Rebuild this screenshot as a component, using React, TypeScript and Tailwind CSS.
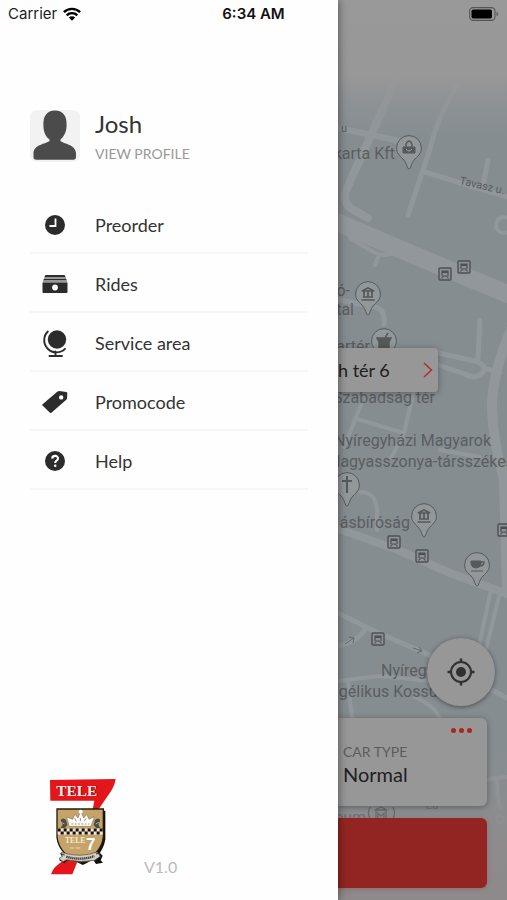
import React from "react";

function ClockIcon() {
  return (
    <svg className="size-5" viewBox="0 0 20 20" aria-hidden="true">
      <circle cx="10" cy="10" r="10" fill="#2c2c2c" />
      <path d="M10.5 3.5v7.500H4.5" fill="none" stroke="#fff" strokeWidth="1.8" />
    </svg>
  );
}

function RidesIcon() {
  return (
    <svg className="h-[18px] w-[26px]" viewBox="0 0 26 18" aria-hidden="true">
      <path d="M3.5 0h19l1.2 2H2.4z" fill="#2c2c2c" />
      <path d="M2.4 2h21.3l.5 2H1.8z" fill="#999" />
      <path d="M1.8 4h22.4l.6 1.6H1.2z" fill="#2c2c2c" />
      <path d="M1.2 5.6h23.6l.4 2H.8z" fill="#999" />
      <path d="M.5 7.5h25V17a1 1 0 0 1-1 1h-23a1 1 0 0 1-1-1z" fill="#2c2c2c" />
      <circle cx="13" cy="12.5" r="2.9" fill="#fff" />
    </svg>
  );
}

function GlobeIcon() {
  return (
    <svg className="h-[27px] w-6" viewBox="0 0 24 27" aria-hidden="true">
      <circle cx="14" cy="9.5" r="9.2" fill="#2c2c2c" />
      <path d="M4.8 1.5A12 12 0 0 0 22 18.800M12.5 21.500v4M6.5 26h12.500" fill="none" stroke="#2c2c2c" strokeWidth="1.9" strokeLinecap="round" />
    </svg>
  );
}

function TagIcon() {
  return (
    <svg className="h-6 w-[26px]" viewBox="0 0 26 24" aria-hidden="true">
      <path
        fillRule="evenodd"
        fill="#2c2c2c"
        d="M.6 14.2 15.500 1.600q.8-.6 1.8-.6l7 .9q1 .2 1 1.2l-.2 5q-.1 1-.8 1.700L9.400 22.700q-.9.8-1.700-.1L.5 15.500q-.6-.7.1-1.300zM19.200 5.200a2.200 2.200 0 1 0 0 4.400 2.200 2.200 0 0 0 0-4.400z"
      />
    </svg>
  );
}

function HelpIcon() {
  return (
    <svg className="size-5" viewBox="0 0 20 20" aria-hidden="true">
      <circle cx="10" cy="10" r="10" fill="#2c2c2c" />
      <path d="M7.2 7.6C7.3 4 13 4.1 13 7.4c0 2.2-2.8 2-2.8 4.6" fill="none" stroke="#fff" strokeWidth="2.1" />
      <circle cx="10.2" cy="14.8" r="1.3" fill="#fff" />
    </svg>
  );
}

const menu = [
  { label: "Preorder", icon: <ClockIcon /> },
  { label: "Rides", icon: <RidesIcon /> },
  { label: "Service area", icon: <GlobeIcon /> },
  { label: "Promocode", icon: <TagIcon /> },
  { label: "Help", icon: <HelpIcon /> },
];

function StatusBar() {
  return (
    <header className="absolute inset-x-0 top-0 z-20 grid h-7 grid-cols-3 items-center px-2 font-['Inter',sans-serif] text-[15px] text-[#222]">
      <div className="flex items-center gap-[6px]">
        <span>Carrier</span>
        <svg className="h-[14px] w-[18px]" viewBox="0 0 18 14" aria-hidden="true">
          <path d="M.9 5.2a11.500 11.500 0 0 1 16.200 0M3.700 8.300a7.600 7.600 0 0 1 10.600 0" fill="none" stroke="#000" strokeWidth="2.4" />
          <path d="M5.9 10.600a4.400 4.400 0 0 1 6.200 0L9 13.800z" fill="#000" />
        </svg>
      </div>
      <span className="text-center font-semibold text-[#111]">6:34 AM</span>
      <svg className="h-[14px] w-[30px] justify-self-end" viewBox="0 0 30 14" aria-hidden="true">
        <rect x=".6" y=".6" width="25.4" height="12.8" rx="3.6" fill="none" stroke="#555" strokeWidth="1.1" />
        <rect x="2.5" y="2.5" width="20.5" height="9" rx="1.8" fill="#000" />
        <path d="M27.4 4.8q2 .7 2 2.2t-2 2.2z" fill="#666" />
      </svg>
    </header>
  );
}

function BrandLogo() {
  return (
    <svg className="h-[100px] w-[70px]" viewBox="54 51 210 300" role="img" aria-label="Tele 7">
      <path d="M60 60L257 57Q254 80 235 105L205 149L127 343H63Q70 318 105 300L188 149L193 122H61Z" fill="#e3161b" />
      <text x="82" y="109" fontFamily="Liberation Serif, serif" fontWeight="bold" fontSize="46" fill="#8b1518">TELE</text>
      <text x="79" y="107" fontFamily="Liberation Serif, serif" fontWeight="bold" fontSize="46" fill="#eeeae6">TELE</text>
      <path d="M88 152H226V238Q219 290 158 315Q100 286 88 238Z" fill="#16120c" />
      <path d="M81 147H220V230Q216 282 151 309Q88 284 81 232Z" fill="#c6a369" stroke="#211a11" strokeWidth="4" />
      <path d="M118 199L110 171L128 178L135 163L144 174L152 154L161 174L170 163L177 178L193 170L183 199Z" fill="#fff" stroke="#75613e" strokeWidth="1.5" />
      <circle cx="152" cy="155" r="6" fill="#fff" />
      <path d="M124 192h54" stroke="#a99163" strokeWidth="3" strokeDasharray="6 4" />
      <path d="M139 184l-5-9M151 184v-10M163 184l5-9" stroke="#a99163" strokeWidth="3" />
      <path d="M92 180q7-9 16 0l4 15-8 9H92l6-10zM211 180q-7-9-16 0l-4 15 8 9h12l-6-10z" fill="#4d4b45" />
      <path d="M94 187l10 5M207 187l-10 5" stroke="#aaa99a" strokeWidth="3" />
      <rect x="83" y="206" width="135" height="18" fill="#f0e5ce" />
      <path d="M83 210h135" stroke="#15120e" strokeWidth="9" strokeDasharray="9 9" />
      <path d="M92 219h126" stroke="#15120e" strokeWidth="9" strokeDasharray="9 9" />
      <text x="105" y="250" fontFamily="Liberation Serif, serif" fontWeight="bold" fontSize="23" fill="#f5e9d0">TELE</text>
      <text x="168" y="270" fontFamily="Liberation Sans, sans-serif" fontWeight="bold" fontSize="51" fill="#fff">7</text>
      <path d="M119 264h12m5 0h15" stroke="#ead9b5" strokeWidth="3" />
      <path d="M92 280Q153 301 207 276L218 287L212 301L219 308L198 312L190 300Q153 313 113 300L103 310L87 300L97 293Z" fill="#111" />
      <path d="M94 277Q151 295 202 276L211 289L194 301Q151 309 110 299L99 305L87 296L97 289Z" fill="#d5d0c7" stroke="#47423b" strokeWidth="2" />
      <path d="M109 290Q153 303 193 288" fill="none" stroke="#393631" strokeWidth="7" strokeDasharray="4 2" />
      <path d="M90 281l14 4m94-3 13-3" stroke="#333" strokeWidth="3" />
    </svg>
  );
}

function Drawer() {
  return (
    <aside className="relative z-10 flex w-2/3 flex-col bg-[#fefefe] pt-[110px] text-[#333] shadow-[0_0_9px_rgba(0,0,0,0.5)]">
      <a href="#profile" className="mx-[30px] flex h-[52px] gap-[15px]">
        <svg className="h-[52px] w-[50px] shrink-0" viewBox="0 0 50 52" role="img" aria-label="Profile picture">
          <rect width="50" height="52" rx="7" fill="#f2f2f2" />
          <path d="M25 .6C33 .6 37 6 36.600 15.500C36.500 22 34 26.500 30.500 29.500V31C34 34 45.500 34.500 46 43V47Q46 49.700 43.300 49.700H6.200Q3.500 49.700 3.500 47V43C4 34.500 15.500 34 19.500 31V29.500C15.500 26.500 13.500 22 13.400 15.500C13 6 17 .6 25 .6Z" fill="#4b4b4b" />
        </svg>
        <div>
          <h1 className="text-[24px] leading-7">Josh</h1>
          <p className="mt-[6px] text-[14px] leading-5 text-[#999]">VIEW PROFILE</p>
        </div>
      </a>
      <nav className="mx-[30px] mt-[33px]">
        <ul>
          {menu.map((item) => (
            <li key={item.label} className="border-b-2 border-[#f6f6f6]">
              <a href="#menu" className="flex h-[57px] items-center gap-[15px] pt-[3px] text-[18px]">
                <span className="flex w-[50px] justify-center">{item.icon}</span>
                <span>{item.label}</span>
              </a>
            </li>
          ))}
        </ul>
      </nav>
      <footer className="mt-auto flex items-end gap-[26px] pb-[23px] pl-12">
        <BrandLogo />
        <span className="text-[16px] leading-5 text-[#bbb]">V1.0</span>
      </footer>
    </aside>
  );
}

function Pin({ x, y, children }: { x: number; y: number; children: React.ReactNode }) {
  return (
    <g transform={`translate(${x} ${y})`} fill="none" stroke="#56595a" strokeWidth="1">
      <path d="M0 21C-2 21-2 15-6 11-10 7-12.400 5-12.400 0A12.400 12.400 0 1 1 12.400 0C12.400 5 10 7 6 11 2 15 2 21 0 21Z" fill="#92979a" />
      {children}
    </g>
  );
}

function Museum() {
  return (
    <path d="M-6-3 0-6 6-3zM-5 3H5M-6.500 6H6.500M-4-3V3M0-3V3M4-3V3" strokeWidth="1.700" />
  );
}

function Stop({ x, y }: { x: number; y: number }) {
  return (
    <g transform={`translate(${x} ${y})`} fill="none" stroke="#4e5153">
      <rect x="-6" y="-6" width="12" height="12" rx="1" strokeWidth="1.400" fill="#8c9295" />
      <path d="M-3 2V-3H3V2M-3.500 4.500-1.500 2H1.500L3.500 4.500" strokeWidth="1.200" />
      <path d="M-3-2H3" strokeWidth="2" />
    </g>
  );
}

function CityMap() {
  return (
    <svg className="absolute inset-0 size-full" viewBox="338 0 169 900" preserveAspectRatio="xMinYMin slice" role="img" aria-label="Map">
      <defs>
        <linearGradient id="topFade" x1="0" y1="0" x2="0" y2="1">
          <stop offset="0" stopColor="#999" />
          <stop offset=".52" stopColor="#989898" />
          <stop offset="1" stopColor="#899095" stopOpacity="0" />
        </linearGradient>
        <linearGradient id="bottomFade" x1="0" y1="0" x2="0" y2="1">
          <stop offset="0" stopColor="#8e8d8e" stopOpacity="0" />
          <stop offset=".7" stopColor="#8e8b8c" />
          <stop offset="1" stopColor="#8e8a8b" />
        </linearGradient>
      </defs>
      <rect x="338" width="169" height="900" fill="#868d91" />
      <g fill="none" stroke="#92979b" strokeLinejoin="round" strokeLinecap="round">
        <path d="M396 80 371 135 348 186Q341 200 350 208L368 218" strokeWidth="8" />
        <path d="M338 128 400 141" strokeWidth="6" />
        <path d="M457 85Q438 115 429 152L408 215M425 172 507 197M488 160 483 185" strokeWidth="5" />
        <path d="M330 219 395 247 440 266 515 297" strokeWidth="18" />
        <path d="M350 238 375 253Q388 258 400 250M375 265 379 255" strokeWidth="4" />
        <circle cx="504" cy="225" r="8" strokeWidth="4" />
        <path d="M330 298 375 307Q386 310 384 324M480 320 478 359M438 353 475 361Q489 366 482 373T465 374L438 365M485 368 500 373" strokeWidth="5" />
        <path d="M513 325Q491 375 492 410 493 441 504 480L507 590" strokeWidth="10" />
        <path d="M361 405 344 447M357 419 404 433 415 386M404 433 391 458M440 450 480 457M360 492Q376 492 377 510V530" strokeWidth="4" />
        <path d="M330 526 398 550 450 573 507 594" strokeWidth="8" />
        <path d="M491 590 477 655M500 592 484 658" strokeWidth="4" />
        <path d="M330 609 376 632 425 653 507 698M366 628Q358 642 338 646" strokeWidth="5" />
        <path d="M330 682 380 676 430 681M348 680 352 718M415 697Q438 708 440 720M488 779 507 777M497 780Q497 800 501 808" strokeWidth="4" />
        <circle cx="500" cy="819" r="4" strokeWidth="2" />
      </g>
      <path d="m345 644 9-6m-5-1 5 1-1 5M413 648l9 3m-3-4 3 4-5 2" fill="none" stroke="#666a6c" />
      <rect x="338" width="169" height="145" fill="url(#topFade)" />
      <rect x="338" y="745" width="169" height="155" fill="url(#bottomFade)" />
      <g fontFamily="Roboto, sans-serif" fontSize="16" fill="#5b5e60">
        <text x="341" y="132" fontSize="11">u</text>
        <text x="395" y="159" textAnchor="end">karta Kft</text>
        <text x="459" y="184" fontSize="11" transform="rotate(13 459 184)">Tavasz u.</text>
        <text x="350" y="296" textAnchor="end">ó-</text>
        <text x="354" y="315" textAnchor="end">tal</text>
        <text x="370" y="352" textAnchor="end">vartér</text>
        <text x="435" y="403" textAnchor="end">Szabadság tér</text>
        <text x="491" y="446" textAnchor="end">Nyíregyházi Magyarok</text>
        <text x="329" y="467">Nagyasszonya-társszékesegyház</text>
        <text x="410" y="528" textAnchor="end">ásbíróság</text>
        <text x="381" y="676">Nyíregyházi</text>
        <text x="330" y="697">ngélikus Kossuth</text>
        <text x="366" y="823" textAnchor="end" fill="#727273">eum</text>
        <text x="426" y="809" fontSize="11" fill="#727273">Eu</text>
      </g>
      <Pin x={409} y={148}>
        <path d="M-6-1H6V5H-6z" fill="#56595a" />
        <path d="M-3-1V-4Q0-10 3-4V-1" strokeWidth="1.500" />
        <path d="M-3 1Q0 5 3 1" stroke="#9da1a3" />
      </Pin>
      <Pin x={368} y={294}><Museum /></Pin>
      <Pin x={384} y={341}>
        <path d="M-7-3H7L5 1V7H-5V1zM1-3 4-8" fill="#56595a" strokeWidth="1.500" />
      </Pin>
      <Pin x={347} y={485}>
        <path d="M0-9V8M-5-4H5" strokeWidth="2" />
      </Pin>
      <Pin x={424} y={516}><Museum /></Pin>
      <Pin x={477} y={565}>
        <path d="M-6-4H4V-1Q3 3-1 3T-6-1zM-6 6H6" fill="#56595a" />
        <path d="M4-3H7Q7 1 3 1" strokeWidth="1.500" />
      </Pin>
      <Stop x={445} y={274} />
      <Stop x={464} y={267} />
      <Stop x={394} y={542} />
      <Stop x={422} y={556} />
      <Stop x={504} y={530} />
      <Stop x={378} y={639} />
      <g transform="translate(381 813)" fill="none" stroke="#6b6b6c">
        <path d="M-11-6Q-14 0-11 6M12-6Q15 0 12 6M-6-3 0-6 6-3zM-5-2V6H5V-2M-3 5V0L0 3 3 0V5" strokeWidth="1.300" />
      </g>
    </svg>
  );
}

function MapScreen() {
  return (
    <main className="relative flex min-w-0 flex-1 flex-col overflow-hidden pb-3">
      <CityMap />
      <button type="button" className="relative mt-[348px] mr-[69px] flex h-11 items-center justify-between rounded-r-[4px] bg-[#979797] pr-[5px] text-[18px] text-[#202020] shadow-[0_1px_7px_rgba(0,0,0,0.35)]">
        <span className="whitespace-nowrap">h tér 6</span>
        <svg className="h-4 w-[10px]" viewBox="0 0 10 16" aria-hidden="true">
          <path d="m1 1 7.500 7L1 15" fill="none" stroke="#b12d2c" strokeWidth="1.500" />
        </svg>
      </button>
      <button type="button" aria-label="Center on my location" className="relative mt-auto mr-3 flex size-[68px] items-center justify-center self-end rounded-full bg-[#979797] shadow-[0_1px_5px_rgba(0,0,0,0.45)]">
        <svg className="size-7" viewBox="0 0 28 28" aria-hidden="true">
          <circle cx="14" cy="14" r="10" fill="none" stroke="#303030" strokeWidth="2" />
          <circle cx="14" cy="14" r="5" fill="#303030" />
          <path d="M14 .5V5M14 23v4.500M.5 14H5M23 14h4.500" stroke="#303030" strokeWidth="2.400" />
        </svg>
      </button>
      <button type="button" className="relative mt-3 mr-5 flex h-[88px] flex-col rounded-r-[6px] bg-[#979797] px-[5px] text-left shadow-[0_1px_6px_rgba(0,0,0,0.35)]">
        <span className="flex h-6 items-center gap-[3px] self-end pr-[10px]">
          <span className="size-[5px] rounded-full bg-[#ae241f]" />
          <span className="size-[5px] rounded-full bg-[#ae241f]" />
          <span className="size-[5px] rounded-full bg-[#ae241f]" />
        </span>
        <span className="text-[14px] leading-5 text-[#5c5c5c]">CAR TYPE</span>
        <span className="text-[20px] leading-6 text-[#202020]">Normal</span>
      </button>
      <button type="button" aria-label="Order" className="relative mt-3 mr-5 h-[70px] rounded-r-[6px] bg-[#922521] shadow-[0_1px_5px_rgba(146,37,33,0.3)]" />
    </main>
  );
}

export default function App() {
  return (
    <div className="relative flex min-h-screen overflow-hidden font-['Lato',sans-serif]">
      <StatusBar />
      <Drawer />
      <MapScreen />
    </div>
  );
}
